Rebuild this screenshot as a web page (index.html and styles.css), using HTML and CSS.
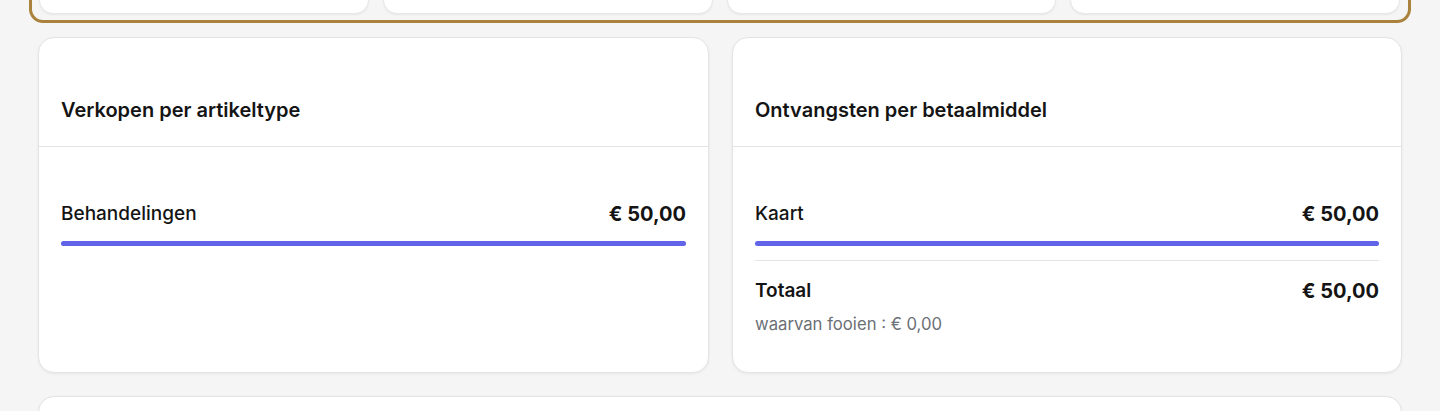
FILE: index.html
```html
<!DOCTYPE html>
<html lang="nl">
<head>
<meta charset="utf-8">
<title>Rapport</title>
<link rel="stylesheet" href="styles.css">
</head>
<body>
<div class="page">
  <div class="highlight">
    <div class="stat"></div>
    <div class="stat"></div>
    <div class="stat"></div>
    <div class="stat"></div>
  </div>

  <div class="grid">
    <section class="card">
      <header class="card-head"><h2>Verkopen per artikeltype</h2></header>
      <div class="card-body">
        <div class="row"><span class="label">Behandelingen</span><span class="amount">€ 50,00</span></div>
        <div class="bar"><div class="fill" style="width:100%"></div></div>
      </div>
    </section>
    <section class="card">
      <header class="card-head"><h2>Ontvangsten per betaalmiddel</h2></header>
      <div class="card-body">
        <div class="row"><span class="label">Kaart</span><span class="amount">€ 50,00</span></div>
        <div class="bar"><div class="fill" style="width:100%"></div></div>
        <hr class="divider">
        <div class="row total"><span class="label">Totaal</span><span class="amount">€ 50,00</span></div>
        <p class="note">waarvan fooien : € 0,00</p>
      </div>
    </section>
  </div>

  <section class="card bottom"></section>
</div>
</body>
</html>
```

FILE: styles.css
```css
* { box-sizing: border-box; }
html, body { margin: 0; padding: 0; }
body {
  background: #f5f5f5;
  font-family: Inter, "Noto Sans", sans-serif;
  color: #141414;
  overflow: hidden;
  height: 411px;
}
.page { padding: 0 38px; }

.highlight {
  margin: -57px -9px 0;
  border: 3px solid #a9823d;
  border-radius: 14px;
  padding: 8px 8px 6px 7px;
  display: grid;
  grid-template-columns: repeat(4, 1fr);
  gap: 14px;
}
.stat {
  height: 60px;
  background: #fff;
  border: 1px solid #e8e8e8;
  border-radius: 14px;
  box-shadow: 0 1px 2px rgba(0,0,0,0.06);
}

.grid {
  margin-top: 14px;
  display: grid;
  grid-template-columns: 671px 1fr;
  gap: 23px;
}
.card {
  background: #fff;
  border: 1px solid #e4e4e4;
  border-radius: 16px;
  box-shadow: 0 1px 3px rgba(0,0,0,0.06);
}
.card-head {
  padding: 60px 22px 24px;
  border-bottom: 1px solid #e4e4e4;
}
.card-head h2 {
  margin: 0;
  font-size: 20px;
  line-height: 24px;
  font-weight: 600;
  color: #141414;
}
.card-body { padding: 55px 22px 37px; }
.row {
  display: flex;
  justify-content: space-between;
  align-items: center;
  line-height: 24px;
}
.label { font-size: 19px; font-weight: 500; }
.amount { font-size: 20px; font-weight: 700; }
.bar {
  margin-top: 15px;
  height: 5px;
  border-radius: 3px;
  background: #eef;
}
.fill { height: 100%; border-radius: 3px; background: #6163e8; }
.divider {
  margin: 14px 0 0;
  border: 0;
  border-top: 1px solid #e4e4e4;
}
.total { margin-top: 18px; }
.total .label { font-weight: 600; }
.note {
  margin: 10px 0 0;
  font-size: 16.7px;
  line-height: 22px;
  color: #6b6f76;
}
.bottom { margin-top: 23px; height: 60px; }
```
